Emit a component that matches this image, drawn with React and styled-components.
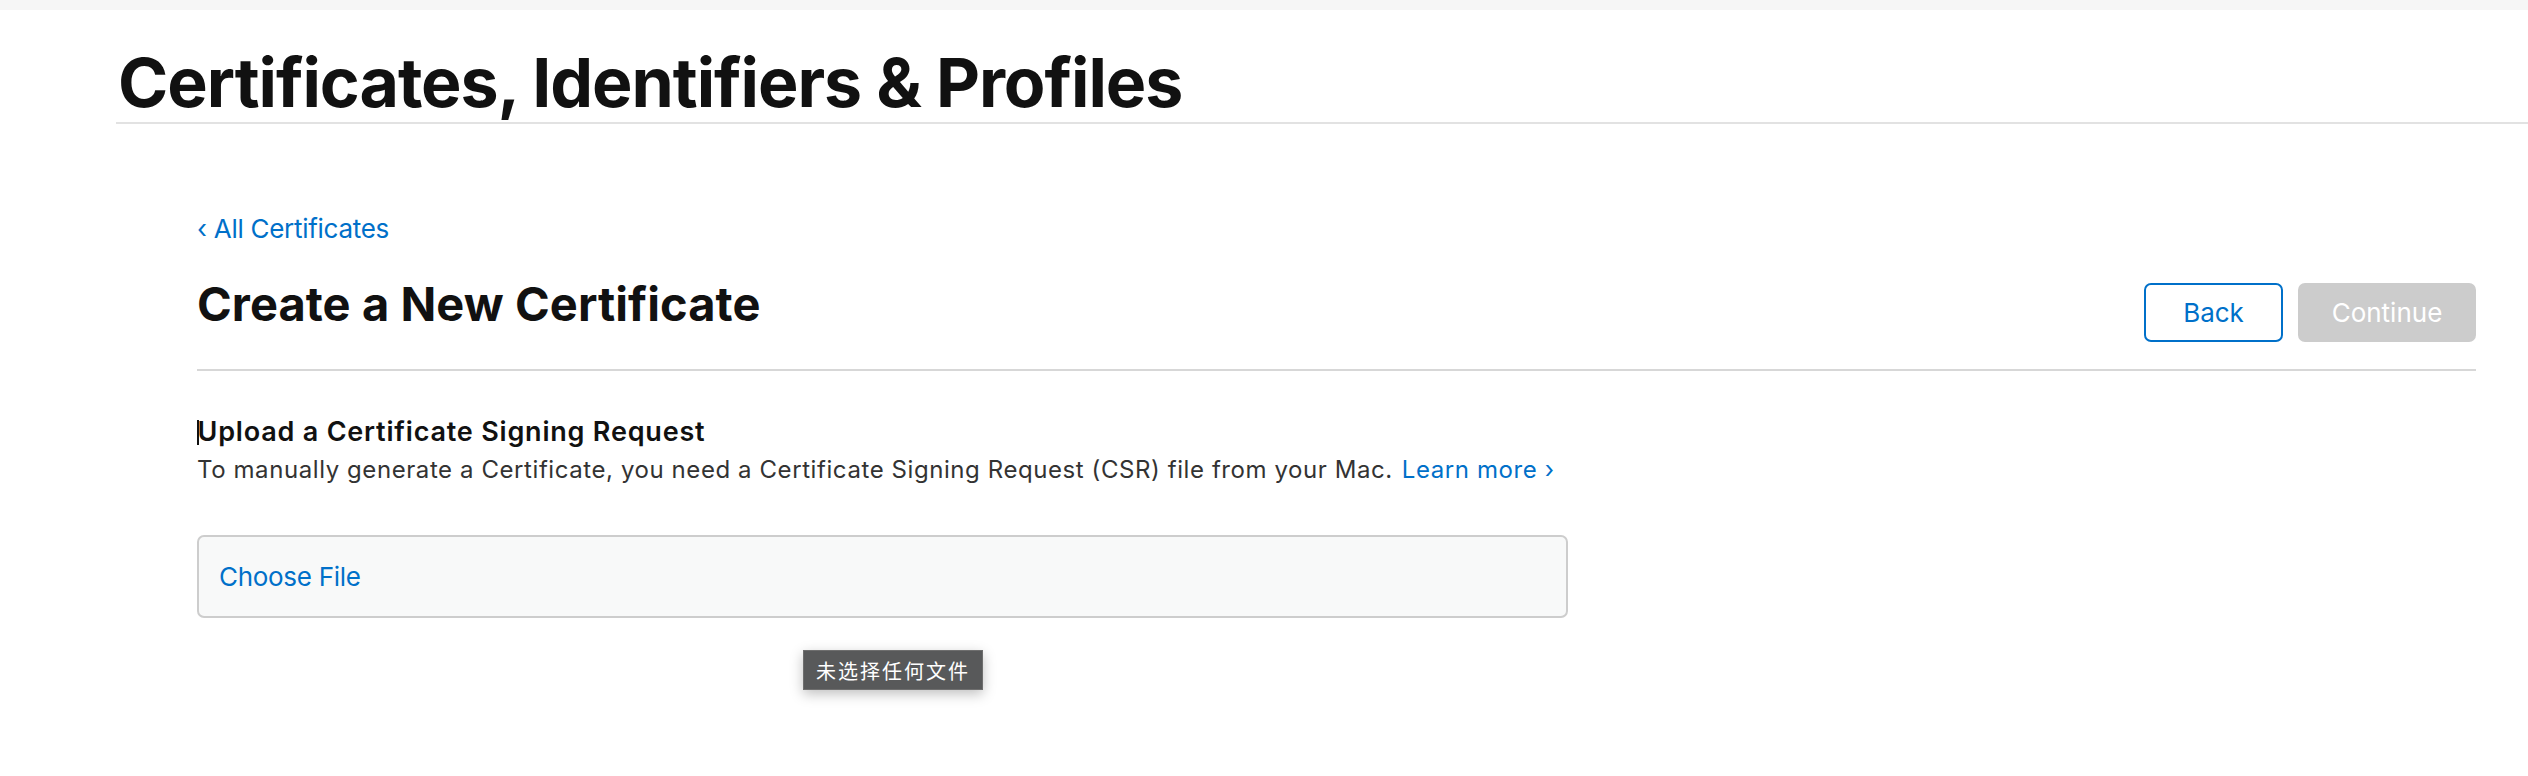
import React from "react";
import styled, { createGlobalStyle } from "styled-components";

const GlobalStyle = createGlobalStyle`
  html, body { margin: 0; padding: 0; background: #ffffff; }
  body {
    font-family: Inter, "Noto Sans", "Noto Sans CJK SC", sans-serif;
    color: #1d1d1f;
    -webkit-font-smoothing: antialiased;
  }
  * { box-sizing: border-box; }
`;

const Page = styled.div`
  width: 2528px;
  min-height: 776px;
  background: #fff;
`;

const TopBand = styled.div`
  height: 10px;
  background: #f6f6f6;
`;

const Header = styled.header`
  margin-left: 116px;
  padding-top: 38px;
  padding-bottom: 6px;
  border-bottom: 2px solid #e2e2e2;
`;

const SiteTitle = styled.h1`
  margin: 0;
  padding-left: 2px;
  font-size: 68px;
  line-height: 68px;
  font-weight: 700;
  letter-spacing: -1.05px;
  color: #111111;
`;

const Main = styled.main`
  padding: 89px 52px 0 197px;
`;

const BackLink = styled.a`
  display: inline-block;
  font-size: 26px;
  line-height: 32px;
  color: #0070c9;
  text-decoration: none;
  letter-spacing: -0.28px;
`;

const HeadingRow = styled.div`
  display: flex;
  justify-content: space-between;
  align-items: flex-start;
  margin-top: 31px;
  padding-bottom: 27px;
  border-bottom: 2px solid #d7d7d7;
`;

const PageTitle = styled.h2`
  margin: 0;
  font-size: 47px;
  line-height: 56px;
  font-weight: 700;
  color: #111111;
  letter-spacing: 0.07px;
`;

const Actions = styled.div`
  display: flex;
  gap: 15px;
  margin-top: 7px;
`;

const Button = styled.button`
  height: 59px;
  width: ${(p) => p.$width}px;
  border-radius: 7px;
  font-family: inherit;
  font-size: 26px;
  font-weight: 400;
  cursor: pointer;
  border: 2px solid ${(p) => (p.$primary ? "#cccccc" : "#0070c9")};
  background: ${(p) => (p.$primary ? "#cccccc" : "#ffffff")};
  color: ${(p) => (p.$primary ? "#ffffff" : "#0070c9")};
`;

const Section = styled.section`
  margin-top: 46px;
`;

const SectionTitle = styled.h3`
  margin: 0;
  font-size: 27px;
  line-height: 30px;
  font-weight: 600;
  color: #111111;
  letter-spacing: 0.8px;
  &::before {
    content: "";
    display: inline-block;
    width: 1.5px;
    height: 25px;
    background: #111;
    vertical-align: -4px;
    margin-right: -1px;
  }
`;

const Description = styled.p`
  margin: 9px 0 0;
  font-size: 24px;
  line-height: 28px;
  color: #333333;
  letter-spacing: 0.58px;
`;

const InlineLink = styled.a`
  color: #0070c9;
  text-decoration: none;
  margin-left: 9px;
`;

const FileField = styled.div`
  position: relative;
  margin-top: 51px;
  width: 1371px;
  height: 83px;
  display: flex;
  align-items: center;
  padding-left: 20px;
  background: #f8f9f9;
  border: 2px solid #cdcdcd;
  border-radius: 7px;
`;

const ChooseFile = styled.span`
  font-size: 26px;
  color: #0070c9;
  letter-spacing: -0.3px;
`;

const Tooltip = styled.div`
  position: absolute;
  left: 604px;
  top: 113px;
  width: 180px;
  height: 40px;
  display: flex;
  align-items: center;
  justify-content: center;
  background: #58595a;
  border: 1px solid #6e6e6e;
  color: #ffffff;
  font-family: "Noto Sans CJK SC", sans-serif;
  font-size: 20px;
  letter-spacing: 2px;
  box-shadow: 0 4px 12px rgba(0, 0, 0, 0.25);
`;

export default function App() {
  return (
    <Page>
      <GlobalStyle />
      <TopBand />
      <Header>
        <SiteTitle>Certificates, Identifiers &amp; Profiles</SiteTitle>
      </Header>
      <Main>
        <BackLink href="#">‹ All Certificates</BackLink>
        <HeadingRow>
          <PageTitle>Create a New Certificate</PageTitle>
          <Actions>
            <Button $width={139}>Back</Button>
            <Button $width={178} $primary>
              Continue
            </Button>
          </Actions>
        </HeadingRow>
        <Section>
          <SectionTitle>Upload a Certificate Signing Request</SectionTitle>
          <Description>
            To manually generate a Certificate, you need a Certificate Signing
            Request (CSR) file from your Mac.
            <InlineLink href="#">Learn more ›</InlineLink>
          </Description>
          <FileField>
            <ChooseFile>Choose File</ChooseFile>
            <Tooltip>未选择任何文件</Tooltip>
          </FileField>
        </Section>
      </Main>
    </Page>
  );
}
